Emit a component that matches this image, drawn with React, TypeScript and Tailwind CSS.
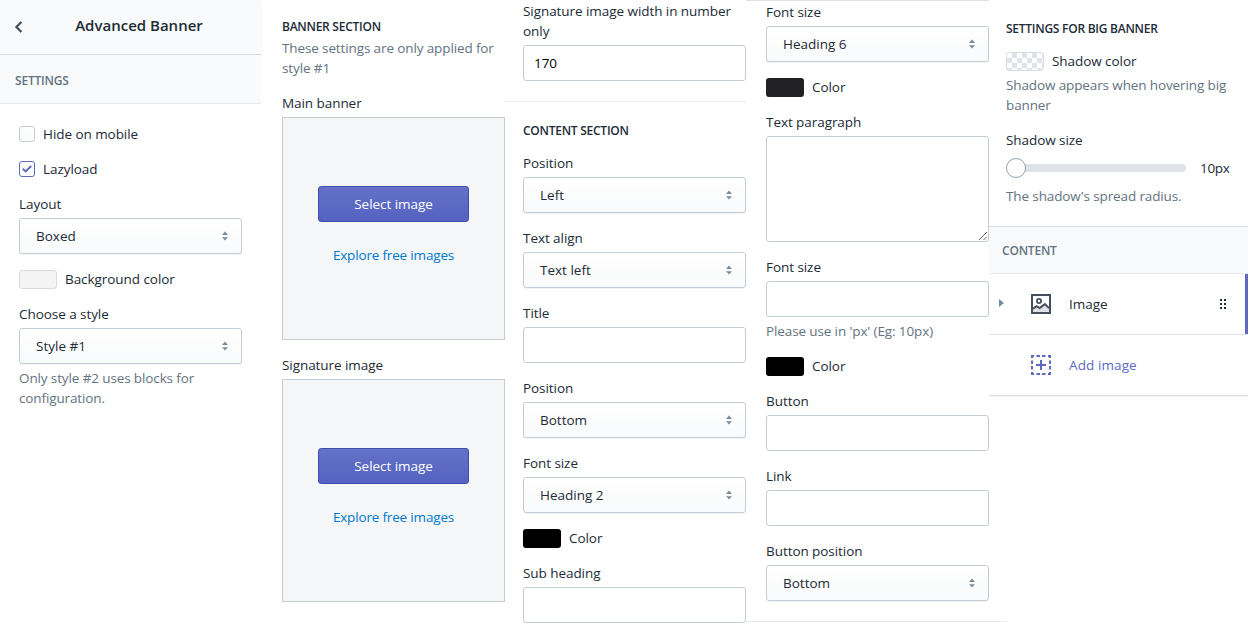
import type { ReactNode } from 'react';

function Carets() {
  return (
    <svg width="8" height="10" viewBox="0 0 8 10" fill="#798c9c" aria-hidden="true">
      <path d="M1 4 4 0.6 7 4Z" />
      <path d="M1 6.2 4 9.6 7 6.2Z" />
    </svg>
  );
}

function Label({ children }: { children: ReactNode }) {
  return <div className="mb-1 leading-5">{children}</div>;
}

function Help({ children }: { children: ReactNode }) {
  return <p className="leading-5 tracking-[-0.12px] text-[#637381]">{children}</p>;
}

function Heading({ children }: { children: ReactNode }) {
  return <h3 className="text-xs leading-5 font-semibold tracking-[-0.25px] text-[#212b36]">{children}</h3>;
}

function SelectField({ label, value, help }: { label: string; value: string; help?: ReactNode }) {
  return (
    <div>
      <Label>{label}</Label>
      <button
        type="button"
        className="flex h-9 w-[223px] items-center justify-between rounded-[3px] border border-[#c4cdd5] bg-gradient-to-b from-white to-[#f9fafb] pr-3 pl-4 text-left shadow-[0_1px_0_rgba(22,29,37,0.05)]"
      >
        <span className="tracking-normal">{value}</span>
        <Carets />
      </button>
      {help && <div className="mt-1">{help}</div>}
    </div>
  );
}

function TextField({ label, value, help }: { label: ReactNode; value?: string; help?: ReactNode }) {
  return (
    <div>
      <Label>{label}</Label>
      <div className="flex h-9 w-[223px] items-center rounded-[3px] border border-[#c4cdd5] bg-white px-2.5 text-black">
        {value}
      </div>
      {help && <div className="mt-1">{help}</div>}
    </div>
  );
}

function Swatch({ label, children }: { label: string; children: ReactNode }) {
  return (
    <div className="flex h-5 items-center gap-2">
      {children}
      <span className="leading-5">{label}</span>
    </div>
  );
}

function ImagePicker({ label }: { label: string }) {
  return (
    <div>
      <Label>{label}</Label>
      <div className="flex h-[223px] w-[223px] flex-col items-center border border-[#c4cdd5] bg-[#f4f6f8] pt-[68px]">
        <button
          type="button"
          className="h-9 w-[151px] rounded-[3px] border border-[#3f4eae] bg-gradient-to-b from-[#6371c7] to-[#5563c1] tracking-[-0.05px] text-white shadow-[inset_0_1px_0_#6774c8]"
        >
          Select image
        </button>
        <a className="mt-[23px] leading-5 tracking-[-0.17px] text-[#007ace]">Explore free images</a>
      </div>
    </div>
  );
}

function Checkbox({ label, checked }: { label: string; checked?: boolean }) {
  return (
    <div className="flex h-5 items-center gap-2">
      {checked ? (
        <span className="flex size-4 items-center justify-center rounded-[3px] border border-[#5c6ac4] bg-white">
          <svg width="10" height="8" viewBox="0 0 10 8" fill="none" stroke="#5c6ac4" strokeWidth="2" aria-hidden="true">
            <path d="M0.8 3.8 3.7 6.4 9.2 1" />
          </svg>
        </span>
      ) : (
        <span className="size-4 rounded-[3px] border border-[#c4cdd5] bg-gradient-to-b from-white to-[#f9fafb]" />
      )}
      <span className="leading-5">{label}</span>
    </div>
  );
}

function ImageIcon() {
  return (
    <svg width="20" height="20" viewBox="0 0 20 20" fill="none" aria-hidden="true">
      <path d="M2 15 6 12l3 2 5-4 4 4v4H2Z" fill="#dfe3e8" />
      <path d="M1 1h18v18H1Z" stroke="#454f5b" strokeWidth="2" />
      <circle cx="8" cy="7" r="2.1" stroke="#454f5b" strokeWidth="1.8" />
      <path d="m2 14.6 3.5-2.5 3.2 2 5.2-4 4.1 4" stroke="#454f5b" strokeWidth="2" />
    </svg>
  );
}

function AddIcon() {
  return (
    <svg width="20" height="20" viewBox="0 0 20 20" fill="none" stroke="#5c6ac4" strokeWidth="2" aria-hidden="true">
      <path d="M0 1h3M5.5 1h3.5M11 1h3.5M17 1h3M0 19h3M5.5 19h3.5M11 19h3.5M17 19h3" />
      <path d="M1 0v3M1 5.5V9M1 11v3.5M1 17v3M19 0v3M19 5.5V9M19 11v3.5M19 17v3M10 5v10M5 10h10" />
    </svg>
  );
}

export default function App() {
  return (
    <div className="flex h-[628px] w-[1250px] overflow-hidden bg-white font-['Open_Sans','Noto_Sans',sans-serif] text-[13.5px] tracking-[-0.06px] text-[#212b36]">
      <section className="w-[261px] shrink-0">
        <header className="flex h-[55px] items-center border-b border-[#d5d9dd] bg-[#f9fafb] pb-1 shadow-[0_1px_2px_rgba(0,0,0,0.06)]">
          <svg className="mt-1 ml-3.5" width="9" height="12" viewBox="0 0 9 12" fill="none" stroke="#454f5b" strokeWidth="2.2" aria-hidden="true">
            <path d="M7.4 1 2.4 6l5 5" />
          </svg>
          <h1 className="w-[232px] text-center text-[15px] leading-6 font-semibold tracking-normal">Advanced Banner</h1>
        </header>
        <div className="flex h-[49px] items-center border-b border-[#e6e8eb] bg-[#f9fafb] pt-1 pl-[15px]">
          <h2 className="text-xs font-semibold tracking-[-0.2px] text-[#637381]">SETTINGS</h2>
        </div>
        <div className="flex flex-col gap-[15px] pt-5 pl-[19px]">
          <Checkbox label="Hide on mobile" />
          <Checkbox label="Lazyload" checked />
          <SelectField label="Layout" value="Boxed" />
          <Swatch label="Background color">
            <span className="h-[19px] w-[38px] rounded-[3px] border border-[#d9dbdd] bg-[#f4f4f4]" />
          </Swatch>
          <SelectField label="Choose a style" value="Style #1" help={<Help>Only style #2 uses blocks for<br />configuration.</Help>} />
        </div>
      </section>

      <section className="flex w-[244px] shrink-0 flex-col gap-[15px] pt-[17px] pl-[21px]">
        <div>
          <Heading>BANNER SECTION</Heading>
          <div className="mt-px whitespace-nowrap">
            <Help>These settings are only applied for<br />style #1</Help>
          </div>
        </div>
        <ImagePicker label="Main banner" />
        <ImagePicker label="Signature image" />
      </section>

      <section className="w-[241px] shrink-0">
        <div className="h-[102px] border-b border-[#ebeced] pt-px pl-[18px]">
          <TextField label={<>Signature image width in number<br />only</>} value="170" />
        </div>
        <div className="flex flex-col gap-[15px] pt-[19px] pl-[18px]">
          <div className="-mb-[3px]"><Heading>CONTENT SECTION</Heading></div>
          <SelectField label="Position" value="Left" />
          <SelectField label="Text align" value="Text left" />
          <TextField label="Title" />
          <SelectField label="Position" value="Bottom" />
          <SelectField label="Font size" value="Heading 2" />
          <Swatch label="Color">
            <span className="h-[19px] w-[38px] rounded-[3px] bg-black" />
          </Swatch>
          <TextField label="Sub heading" />
        </div>
      </section>

      <section className="w-[243px] shrink-0">
        <div className="h-px bg-[#dfe1e3]" />
        <div className="flex h-[620px] flex-col gap-[15px] pt-px pl-5">
          <SelectField label="Font size" value="Heading 6" />
          <Swatch label="Color">
            <span className="h-[19px] w-[38px] rounded-[3px] bg-[#212123]" />
          </Swatch>
          <div>
            <Label>Text paragraph</Label>
            <div className="flex h-[106px] w-[223px] items-end justify-end rounded-[3px] border border-[#c4cdd5] bg-white p-px">
              <svg width="8" height="8" viewBox="0 0 8 8" stroke="#555" strokeWidth="0.9" aria-hidden="true">
                <path d="M0 8 8 0M4.5 8 8 4.5" />
              </svg>
            </div>
          </div>
          <TextField label="Font size" help={<Help>Please use in 'px' (Eg: 10px)</Help>} />
          <Swatch label="Color">
            <span className="h-[19px] w-[38px] rounded-[3px] bg-black" />
          </Swatch>
          <TextField label="Button" />
          <TextField label="Link" />
          <SelectField label="Button position" value="Bottom" />
        </div>
        <div className="h-px w-[260px] bg-[#e8eaec]" />
      </section>

      <section className="w-[259px] shrink-0">
        <div className="h-[226px] pt-[18px] pl-[17px]">
          <div className="pt-px"><Heading>SETTINGS FOR BIG BANNER</Heading></div>
          <div className="mt-3">
            <Swatch label="Shadow color">
              <span className="h-[19px] w-[38px] rounded-[3px] border border-[#d9dde1] bg-[conic-gradient(#dfe3e8_25%,#fff_0_50%,#dfe3e8_0_75%,#fff_0)] bg-[length:10px_10px]" />
            </Swatch>
          </div>
          <div className="mt-1 whitespace-nowrap">
            <Help>Shadow appears when hovering big<br />banner</Help>
          </div>
          <div className="mt-[15px] leading-5">Shadow size</div>
          <div className="mt-2 flex h-5 items-center">
            <span className="z-10 size-5 shrink-0 rounded-full border border-[#919eab] bg-white" />
            <span className="-ml-1 h-2 w-[164px] rounded-r-full bg-[#dfe3e8]" />
            <span className="ml-3.5 tracking-[-0.3px]">10px</span>
          </div>
          <div className="mt-2">
            <Help>The shadow's spread radius.</Help>
          </div>
        </div>
        <div className="flex h-12 items-center border-y border-t-[#d9dcdf] border-b-[#e6e8eb] bg-[#f9fafb] pt-0.5 pl-[13px]">
          <h2 className="text-xs font-semibold tracking-[-0.2px] text-[#637381]">CONTENT</h2>
        </div>
        <div className="flex h-[61px] items-center border-b border-[#dfe3e8]">
          <svg className="-mt-0.5 ml-2.5" width="5" height="8" viewBox="0 0 5 8" fill="#798c9c" aria-hidden="true">
            <path d="M0 0 5 4 0 8Z" />
          </svg>
          <span className="ml-[27px]"><ImageIcon /></span>
          <span className="ml-[18px] tracking-normal">Image</span>
          <svg className="ml-auto" width="7" height="10" viewBox="0 0 7 10" fill="#212b36" aria-hidden="true">
            <path d="M0 0h2v2H0ZM4 0h2v2H4ZM0 4h2v2H0ZM4 4h2v2H4ZM0 8h2v2H0ZM4 8h2v2H4Z" />
          </svg>
          <span className="ml-[18px] h-full w-[3px] bg-[#5c6ac4]" />
        </div>
        <div className="flex h-[61px] items-center border-b border-[#dadde0] pl-[42px] text-[#5c6ac4] shadow-[0_1px_0_#f2f3f4]">
          <AddIcon />
          <span className="ml-[18px] tracking-[0.1px]">Add image</span>
        </div>
      </section>
    </div>
  );
}
